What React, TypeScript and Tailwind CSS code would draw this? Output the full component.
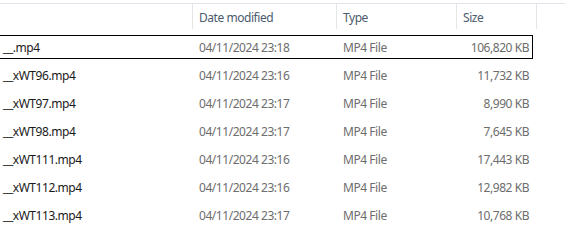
import React from "react";

const rows = [
  { name: "__.mp4", date: "04/11/2024 23:18", type: "MP4 File", size: "106,820 KB", selected: true },
  { name: "__xWT96.mp4", date: "04/11/2024 23:16", type: "MP4 File", size: "11,732 KB" },
  { name: "__xWT97.mp4", date: "04/11/2024 23:17", type: "MP4 File", size: "8,990 KB" },
  { name: "__xWT98.mp4", date: "04/11/2024 23:17", type: "MP4 File", size: "7,645 KB" },
  { name: "__xWT111.mp4", date: "04/11/2024 23:16", type: "MP4 File", size: "17,443 KB" },
  { name: "__xWT112.mp4", date: "04/11/2024 23:16", type: "MP4 File", size: "12,982 KB" },
  { name: "__xWT113.mp4", date: "04/11/2024 23:17", type: "MP4 File", size: "10,768 KB" },
];

export default function App() {
  return (
    <div
      className="w-[565px] h-[250px] bg-white overflow-hidden pt-[3px] text-[12px] leading-[16px] tracking-[-0.45px]"
      style={{ fontFamily: '"Segoe UI", "Noto Sans", sans-serif' }}
    >
      <div className="border-t border-[#dfe4ea] flex h-[26px]">
        <div className="w-[192px] shrink-0" />
        <div className="w-[144px] shrink-0 flex">
          <div className="w-px h-[25px] bg-[#e5e5e5]" />
          <div className="pl-[6px] pt-[6px] text-[#4b5a6d]">Date modified</div>
        </div>
        <div className="w-[120px] shrink-0 flex">
          <div className="w-px h-[25px] bg-[#e5e5e5]" />
          <div className="pl-[6px] pt-[6px] text-[#4b5a6d]">Type</div>
        </div>
        <div className="w-[80px] shrink-0 flex">
          <div className="w-px h-[25px] bg-[#e5e5e5]" />
          <div className="pl-[6px] pt-[6px] text-[#4b5a6d]">Size</div>
        </div>
        <div className="flex-1 flex">
          <div className="w-px h-[25px] bg-[#e5e5e5]" />
        </div>
      </div>
      <div className="pt-[4px] -ml-px">
        {rows.map((r) => (
          <div key={r.name} className="h-[28px] py-[2px]">
            <div
              className={
                "w-[534px] h-[24px] flex items-center border " +
                (r.selected ? "border-black" : "border-transparent")
              }
            >
              <div className="w-[192px] shrink-0 pl-[3px] pt-[1px] text-[#1a1a1a] whitespace-nowrap">{r.name}</div>
              <div className="w-[144px] shrink-0 pl-[7px] pt-[1px] text-[#6d6d6d] whitespace-nowrap">{r.date}</div>
              <div className="w-[120px] shrink-0 pl-[7px] pt-[1px] text-[#6d6d6d] whitespace-nowrap">{r.type}</div>
              <div className="w-[73px] shrink-0 pt-[1px] text-right text-[#6d6d6d] whitespace-nowrap">{r.size}</div>
            </div>
          </div>
        ))}
      </div>
    </div>
  );
}
